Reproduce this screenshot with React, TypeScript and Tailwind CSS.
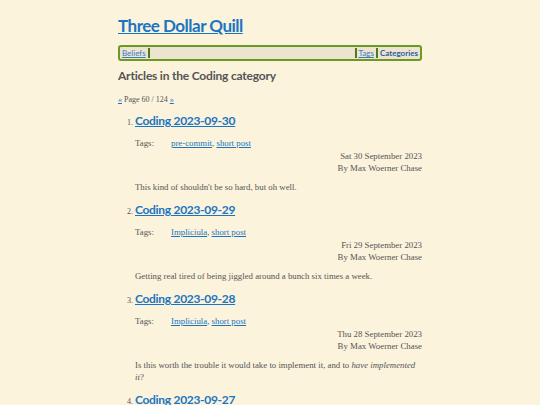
const posts = [
  {
    title: "Coding 2023-09-30",
    tags: ["pre-commit", "short post"],
    date: "Sat 30 September 2023",
    summary: <>This kind of shouldn't be so hard, but oh well.</>,
  },
  {
    title: "Coding 2023-09-29",
    tags: ["Impliciula", "short post"],
    date: "Fri 29 September 2023",
    summary: <>Getting real tired of being jiggled around a bunch six times a week.</>,
  },
  {
    title: "Coding 2023-09-28",
    tags: ["Impliciula", "short post"],
    date: "Thu 28 September 2023",
    summary: (
      <>
        Is this worth the trouble it would take to implement it, and to <em>have implemented it</em>?
      </>
    ),
  },
  {
    title: "Coding 2023-09-27",
    tags: ["Impliciula", "short post"],
    date: "Wed 27 September 2023",
    summary: <>More work.</>,
  },
];

const heading = "font-['Lato','Open_Sans',sans-serif] font-bold";
const serif = "font-['Liberation_Serif','DejaVu_Serif',serif]";

export default function App() {
  return (
    <div className={`min-h-screen bg-[#fbf3dc] text-[#555] ${serif}`}>
      <div className="mx-auto w-[304px] pt-[14px]">
        <h1 className={`${heading} text-[17px] leading-[24px] tracking-[-0.5px]`}>
          <a href="#" className="text-[#1a75c2] underline">
            Three Dollar Quill
          </a>
        </h1>

        <nav className="mt-[7px] flex items-center rounded-[3px] border-2 border-[#6a9a24] bg-[#ece4d0] px-[2px] py-[1px] text-[8px] leading-[10px]">
          <a href="#" className={`${heading} font-normal text-[#3a7bbf] underline`}>
            Beliefs
          </a>
          <span className="ml-[2px] h-[10px] w-[2px] bg-[#4d7a1a]" />
          <span className="flex-1" />
          <span className="mr-[2px] h-[10px] w-[2px] bg-[#4d7a1a]" />
          <a href="#" className={`${heading} font-normal text-[#3a7bbf] underline`}>
            Tags
          </a>
          <span className="mx-[2px] h-[10px] w-[2px] bg-[#4d7a1a]" />
          <a href="#" className={`${heading} text-[#2a5e9c]`}>
            Categories
          </a>
        </nav>

        <h2 className={`${heading} mt-[6px] text-[12px] leading-[18px] tracking-[-0.2px] text-[#555]`}>
          Articles in the Coding category
        </h2>

        <p className="mt-[9px] text-[8px] leading-[12px]">
          <a href="#" className="text-[#1a75c2] underline">«</a> Page 60 / 124{" "}
          <a href="#" className="text-[#1a75c2] underline">»</a>
        </p>

        <ol className="mt-[6px] list-decimal pl-[17px] text-[8.8px] marker:text-[8px]">
          {posts.map((p) => (
            <li key={p.title} className="mb-[8px]">
              <a href="#" className={`${heading} text-[12px] leading-[18px] tracking-[-0.3px] text-[#1a75c2] underline`}>
                {p.title}
              </a>
              <div className="mt-[7px] mb-[1px] flex leading-[12px]">
                <span className="w-[36px]">Tags:</span>
                <span>
                  <a href="#" className="text-[#1a75c2] underline">{p.tags[0]}</a>,{" "}
                  <a href="#" className="text-[#1a75c2] underline">{p.tags[1]}</a>
                </span>
              </div>
              <div className="text-right leading-[12px]">
                <div>{p.date}</div>
                <div>By Max Woerner Chase</div>
              </div>
              <p className="mt-[7px] leading-[12px]">{p.summary}</p>
            </li>
          ))}
        </ol>
      </div>
    </div>
  );
}
